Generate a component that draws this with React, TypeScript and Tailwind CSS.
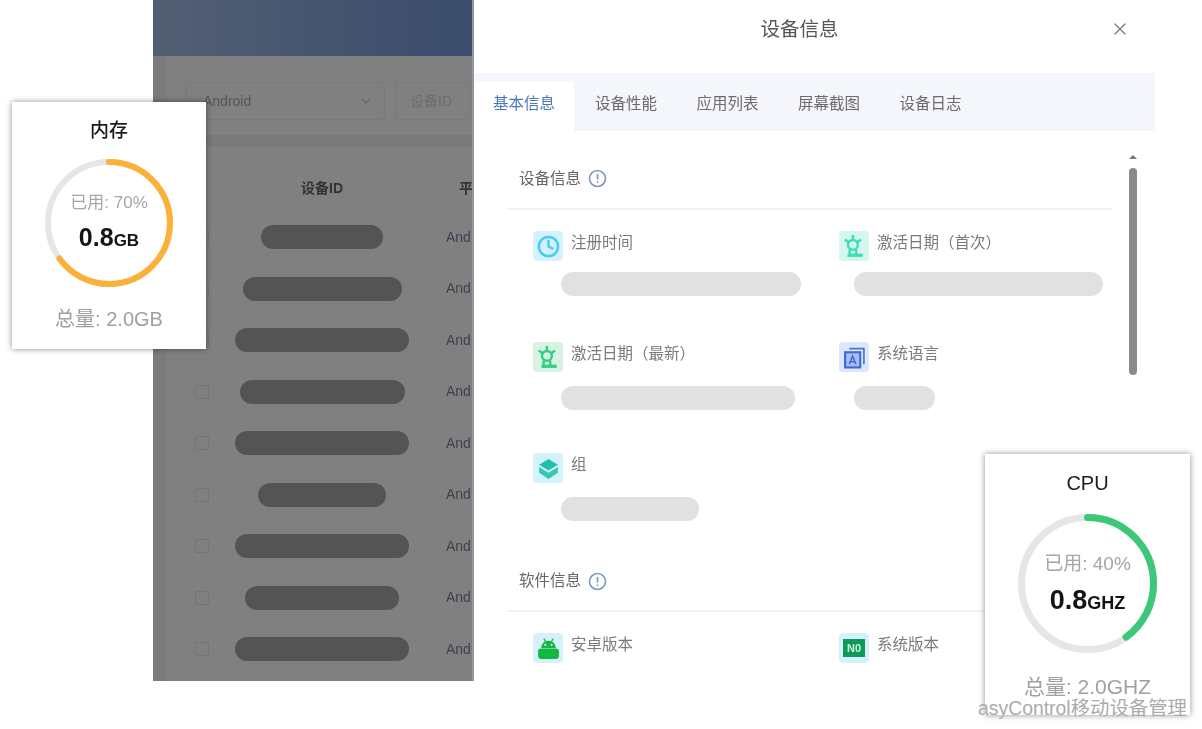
import { Clock, ChevronDown, X } from "lucide-react";
import type { ReactNode } from "react";

const cjk = "font-['Liberation_Sans','Noto_Sans_CJK_SC',sans-serif]";

const pills = [122, 159, 174, 165, 174, 128, 174, 154, 174];

function Backdrop() {
  return (
    <div className="w-[321px] h-[681px] shrink-0 bg-[#808080] overflow-hidden flex flex-col blur-[0.7px] border-r-2 border-r-[#9298a2]">
      <div className="h-[56px] shrink-0 bg-gradient-to-r from-[#525f73] to-[#3b4c6c]" />
      <div className="flex-1 flex">
        <div className="w-[14px] shrink-0 bg-[#797b7e]" />
        <div className="w-[305px] shrink-0 flex flex-col">
          <div className="h-[79px] shrink-0 pl-[19px] pt-[26px] flex gap-[10px] items-start">
            <div className="w-[199px] h-[38px] shrink-0 border border-[#797979] rounded-sm flex items-center justify-between pl-[16px] pr-[10px] text-[14px] text-[#555555]">
              Android
              <ChevronDown size={16} className="text-[#6a6a6a]" />
            </div>
            <div className="w-[76px] h-[38px] shrink-0 border border-[#797979] rounded-sm flex items-center pl-[14px] text-[14px] text-[#6c6c6c]">设备ID</div>
          </div>
          <div className="h-[12px] shrink-0 bg-[#7a7a7a]" />
          <div className="h-[19px] shrink-0" />
          <div className="h-[46px] shrink-0 flex items-center border-b border-[#7a7c7f] text-[14px] font-bold text-[#333333]">
            <div className="w-[56px] shrink-0" />
            <div className="w-[198px] shrink-0 text-center">设备ID</div>
            <div className="pl-[38px] whitespace-nowrap">平</div>
          </div>
          {pills.map((w, i) => (
            <div key={i} className="h-[51.5px] shrink-0 flex items-center border-b border-[#7a7c7f]">
              <div className="w-[56px] shrink-0 pl-[28px]">
                <div className="w-[14px] h-[14px] border border-[#757575] rounded-[2px]" />
              </div>
              <div className="w-[198px] shrink-0 flex justify-center">
                <div className="h-[24px] rounded-full bg-[#545454]" style={{ width: w }} />
              </div>
              <div className="pl-[25px] text-[14px] text-[#3d424d]">And</div>
            </div>
          ))}
        </div>
      </div>
    </div>
  );
}

function Info() {
  return (
    <svg width="19" height="19" viewBox="0 0 19 19" fill="none">
      <circle cx="9.5" cy="9.5" r="8" stroke="#7f97bd" strokeWidth="1.6" />
      <path d="M9.5 5v5.5M9.5 12.5v1.5" stroke="#7f97bd" strokeWidth="1.6" />
    </svg>
  );
}

function Bulb({ color }: { color: string }) {
  return (
    <svg width="24" height="24" viewBox="0 0 22 22" fill="none" stroke={color} strokeWidth="2.2">
      <circle cx="10" cy="10" r="4.5" />
      <path d="M10 1v3.500M2.500 5l3.500 2.500M17.500 5l-3.500 2.500M7 14.500v4M13 14.500v4" />
      <path d="M5 19.500h14" strokeWidth="3" />
    </svg>
  );
}

const icons: Record<string, ReactNode> = {
  clock: <Clock size={23} color="#45cdf5" strokeWidth={2.6} />,
  bulbA: <Bulb color="#3fdcb6" />,
  bulbB: <Bulb color="#2fd07f" />,
  lang: (
    <svg width="23" height="23" viewBox="0 0 22 22" fill="none">
      <path d="M6 2.500h14v15" stroke="#4a74d6" strokeWidth="1.6" />
      <rect x="2" y="6" width="14.500" height="14.500" fill="#a9bdf0" stroke="#3f69cf" strokeWidth="2" />
      <path d="M6 17.500l3.200-8 3.200 8M7 15h4.500" stroke="#3f69cf" strokeWidth="1.4" />
    </svg>
  ),
  cube: (
    <svg width="23" height="23" viewBox="0 0 22 22">
      <path d="M11 2l9 5.500-9 5.500-9-5.500z" fill="#22bfae" />
      <path d="M2 9.500l9 5.500 9-5.500v5.500l-9 6-9-6z" fill="#37c6b2" />
    </svg>
  ),
  android: (
    <svg width="23" height="23" viewBox="0 0 22 22" fill="#12b83f">
      <path d="M4 10.500a7 7 0 0 1 14 0z" />
      <path d="M6.500 1.500L8.500 5M15.500 1.500L13.500 5" stroke="#12b83f" strokeWidth="1.2" />
      <rect x="1" y="11" width="20" height="10" rx="3" />
      <circle cx="8" cy="7.500" r="1" fill="#d6f1fb" />
      <circle cx="14" cy="7.500" r="1" fill="#d6f1fb" />
    </svg>
  ),
  n0: (
    <div className="w-[22px] h-[18px] bg-[#0f9a57] flex items-center justify-center text-[11px] leading-none font-bold text-[#c9f5dc]">N0</div>
  ),
};

const iconBg: Record<string, string> = {
  clock: "bg-[#d5f1fd]",
  bulbA: "bg-[#d4f7ee]",
  bulbB: "bg-[#d8f3e3]",
  lang: "bg-[#dde6fb]",
  cube: "bg-[#d3f2fa]",
  android: "bg-[#d6f1fb]",
  n0: "bg-[#d6f1fb]",
};

function Item({ icon, label, pill, pillClass }: { icon: string; label: string; pill?: number; pillClass?: string }) {
  return (
    <div className="h-[111px] pl-[26px]">
      <div className="flex gap-[8px] items-start">
        <div className={`w-[30px] h-[30px] rounded-[4px] flex items-center justify-center ${iconBg[icon]}`}>{icons[icon]}</div>
        <span className="text-[15.5px] leading-[24px] text-[#7a7a7a] whitespace-nowrap">{label}</span>
      </div>
      {pill ? <div className={`h-[24px] rounded-full bg-[#e1e1e1] ${pillClass}`} style={{ width: pill }} /> : null}
    </div>
  );
}

function SectionTitle({ title, className }: { title: string; className: string }) {
  return (
    <div className={`border-b-2 border-[#f0f1f3] pl-[12px] flex items-center gap-[7px] ${className}`}>
      <span className="text-[15.5px] text-[#666666]">{title}</span>
      <Info />
    </div>
  );
}

function Modal() {
  const tabs = ["基本信息", "设备性能", "应用列表", "屏幕截图", "设备日志"];
  return (
    <div className="w-[681px] h-[681px] shrink-0 bg-white overflow-hidden flex flex-col blur-[0.7px]">
      <div className="h-[73px] shrink-0 relative flex items-start justify-center pt-[15px] pr-[30px]">
        <span className="text-[19.5px] leading-[28px] text-[#555555]">设备信息</span>
        <X size={20} strokeWidth={1.6} color="#808080" className="absolute right-[25px] top-[19px]" />
      </div>
      <div className="h-[58px] shrink-0 bg-[#f4f6fb] flex items-end">
        {tabs.map((t, i) => (
          <div
            key={t}
            className={`h-[49px] flex items-start pt-[8px] text-[15.5px] leading-[28px] whitespace-nowrap ${
              i === 0 ? "w-[100px] pl-[19px] bg-white text-[#4a78b8]" : "w-[101.500px] pl-[21px] text-[#6b6b6b]"
            }`}
          >
            {t}
          </div>
        ))}
      </div>
      <div className="flex-1 flex min-h-0 pl-[33px]">
        <div className="w-[605px] shrink-0 overflow-hidden">
          <SectionTitle title="设备信息" className="h-[79px] pt-[18px]" />
          <div className="pt-[21px] grid grid-cols-[306px_1fr]">
            <Item icon="clock" label="注册时间" pill={240} pillClass="ml-[28px] mt-[11px]" />
            <Item icon="bulbA" label="激活日期（首次）" pill={249} pillClass="ml-[15px] mt-[11px]" />
            <Item icon="bulbB" label="激活日期（最新）" pill={234} pillClass="ml-[28px] mt-[14px]" />
            <Item icon="lang" label="系统语言" pill={81} pillClass="ml-[15px] mt-[14px]" />
            <Item icon="cube" label="组" pill={138} pillClass="ml-[28px] mt-[14px]" />
            <div />
          </div>
          <SectionTitle title="软件信息" className="h-[49px] pb-[11px] -mt-[1px]" />
          <div className="pt-[21px] grid grid-cols-[306px_1fr]">
            <Item icon="android" label="安卓版本" />
            <Item icon="n0" label="系统版本" />
          </div>
        </div>
        <div className="ml-[17px] w-[8px] flex flex-col items-center pt-[24px]">
          <div className="w-0 h-0 border-x-[4px] border-x-transparent border-b-[4px] border-b-[#777777]" />
          <div className="mt-[9px] w-[8px] h-[207px] rounded-full bg-[#8a8a8a]" />
        </div>
      </div>
    </div>
  );
}

function Gauge({
  className, title, titleSize, size, stroke, percent, arc, color, usedSize, big, unit, unitSize, total, totalSize, gapTop, gapBottom,
}: {
  className: string; title: string; titleSize: string; size: number; stroke: number; percent: number; arc: number; color: string;
  usedSize: string; big: string; unit: string; unitSize: string; total: string; totalSize: string; gapTop: string; gapBottom: string;
}) {
  const r = (size - stroke) / 2;
  const c = 2 * Math.PI * r;
  return (
    <div className={`absolute bg-white flex flex-col items-center shadow-[0_0_6px_rgba(0,0,0,0.45)] blur-[0.4px] ${className}`}>
      <div className={`font-medium text-[#1c1c1c] ${titleSize} ${gapTop}`}>{title}</div>
      <div className={`relative flex flex-col items-center justify-center ${gapBottom}`} style={{ width: size, height: size }}>
        <svg width={size} height={size} className="absolute inset-0 -rotate-90">
          <circle cx={size / 2} cy={size / 2} r={r} fill="none" stroke="#e6e6e6" strokeWidth={stroke} />
          <circle cx={size / 2} cy={size / 2} r={r} fill="none" stroke={color} strokeWidth={stroke} strokeLinecap="round" strokeDasharray={`${(c * arc) / 100} ${c}`} />
        </svg>
        <div className={`text-[#a6a6a6] whitespace-nowrap ${usedSize}`}>已用: {percent}%</div>
        <div className={`font-semibold text-[#141414] whitespace-nowrap ${big}`}>
          0.8<span className={unitSize}>{unit}</span>
        </div>
      </div>
      <div className={`text-[#a0a0a0] whitespace-nowrap ${totalSize}`}>{total}</div>
    </div>
  );
}

export default function App() {
  return (
    <div className={`relative w-[1202px] h-[729px] bg-white overflow-hidden flex items-start pl-[153px] ${cjk}`}>
      <Backdrop />
      <Modal />
      <Gauge
        className="left-[12px] top-[102px] w-[194px] h-[247px]"
        title="内存" titleSize="text-[19px] leading-[26px]" gapTop="mt-[16px] mb-[15px]"
        size={128} stroke={6} percent={70} arc={65} color="#fbb138"
        usedSize="text-[17px] leading-[28px]" big="text-[25px] leading-[40px]" unit="GB" unitSize="text-[17px]"
        total="总量: 2.0GB" totalSize="text-[20px] leading-[26px]" gapBottom="mb-[19px] pt-[4px]"
      />
      <Gauge
        className="left-[985px] top-[454px] w-[205px] h-[261px]"
        title="CPU" titleSize="text-[20px] leading-[28px]" gapTop="mt-[15px] mb-[17px]"
        size={139} stroke={7} percent={40} arc={40} color="#3cc878"
        usedSize="text-[19px] leading-[32px]" big="text-[27px] leading-[40px]" unit="GHZ" unitSize="text-[18px]"
        total="总量: 2.0GHZ" totalSize="text-[21px] leading-[28px]" gapBottom="mb-[20px] pt-[3px]"
      />
      <div className="absolute right-[15px] top-[696px] text-[19.400px] leading-[24px] text-[#aaaaaa] whitespace-nowrap [text-shadow:0_0_1px_#ffffff]">
        <span className="text-white">E</span>asyControl移动设备管理
      </div>
    </div>
  );
}
